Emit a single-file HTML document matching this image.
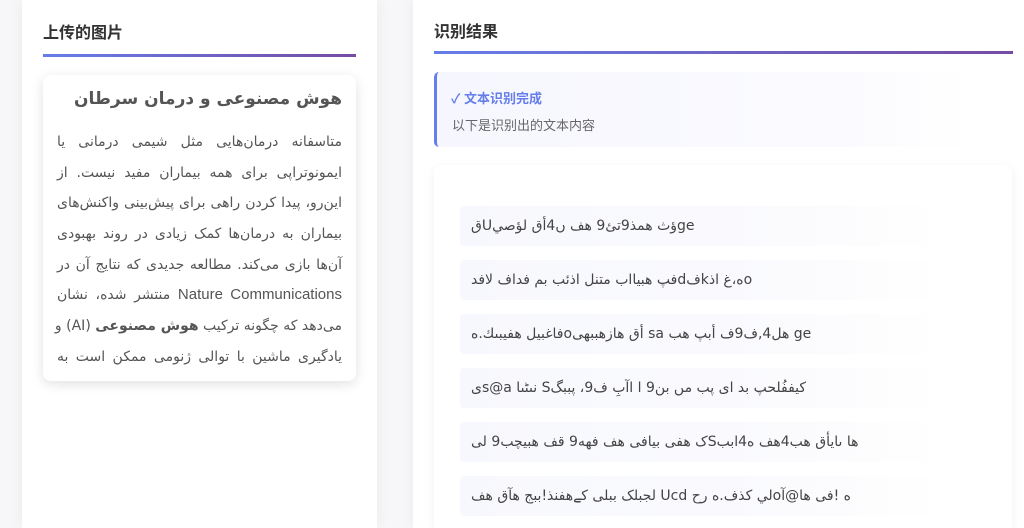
<!DOCTYPE html>
<html><head><meta charset="utf-8"><style>
*{margin:0;padding:0;box-sizing:border-box}
html,body{width:1024px;height:528px;overflow:hidden}
body{background:#f7f7f9;font-family:"Liberation Sans","Noto Sans CJK SC",sans-serif;position:relative}
.panel{position:absolute;top:0;height:528px;background:#fff;box-shadow:0 0 14px rgba(0,0,0,.06)}
.h{position:absolute;font-size:16px;font-weight:bold;color:#333}
.line{position:absolute;height:3px;background:linear-gradient(90deg,#667eea,#764ba2)}
.card{position:absolute;background:#fff;border-radius:8px;box-shadow:0 3px 12px rgba(0,0,0,.12)}
.item{position:absolute;left:26px;width:482px;height:40px;border-radius:4px;background:linear-gradient(90deg,#f7f8fd,#fbfbfe 70%,#fff);font-size:14px;color:#444;line-height:40px;padding-left:11px;direction:ltr;text-align:left;font-family:"DejaVu Sans",sans-serif}
.l{display:block;white-space:nowrap;text-align:justify;text-align-last:justify;height:30.7px}
</style></head><body>
<div class="panel" style="left:22px;width:355px"></div>
<div class="panel" style="left:413px;width:630px"></div>
<div class="h" style="left:43px;top:19px">上传的图片</div>
<div class="line" style="left:43px;top:54px;width:313px"></div>
<div class="card" style="left:43px;top:75px;width:313px;height:306px;overflow:hidden;padding:11px 14px 0 14px;direction:rtl;font-family:'DejaVu Sans',sans-serif;color:#555">
<div style="font-size:17px;font-weight:bold;text-align:right;line-height:26px">هوش مصنوعی و درمان سرطان</div>
<div style="font-size:14px;line-height:30.7px;margin-top:15px">
<span class="l">متاسفانه درمان‌هایی مثل شیمی درمانی یا</span>
<span class="l">ایمونوتراپی برای همه بیماران مفید نیست. از</span>
<span class="l">این‌رو، پیدا کردن راهی برای پیش‌بینی واکنش‌های</span>
<span class="l">بیماران به درمان‌ها کمک زیادی در روند بهبودی</span>
<span class="l">آن‌ها بازی می‌کند. مطالعه جدیدی که نتایج آن در</span>
<span class="l"><span style="font-family:'Liberation Sans';font-size:15px">Nature Communications</span> منتشر شده، نشان</span>
<span class="l">می‌دهد که چگونه ترکیب <b>هوش مصنوعی</b> (AI) و</span>
<span class="l">یادگیری ماشین با توالی ژنومی ممکن است به</span>
</div>
</div>
<div class="h" style="left:434px;top:18px">识别结果</div>
<div class="line" style="left:434px;top:51px;width:579px"></div>
<div style="position:absolute;left:434px;top:72px;width:540px;height:75px;border-left:3px solid #667eea;border-radius:5px;background:linear-gradient(90deg,#f6f7fe,#fafaff 70%,#fff)">
<div style="position:absolute;left:14px;top:16px;font-size:13px;font-weight:bold;color:#667eea">✓ 文本识别完成</div>
<div style="position:absolute;left:15px;top:43px;font-size:13px;color:#666">以下是识别出的文本内容</div>
</div>
<div class="card" style="left:434px;top:165px;width:578px;height:363px;border-radius:8px 8px 0 0;box-shadow:0 2px 10px rgba(0,0,0,.06)">
<div class="item" style="top:41px">قUؤث همذ9تئ9 هف ں4أق لؤصيge</div>
<div class="item" style="top:95px">فپ هبیااب متنل اذئب بم فداف لافدdفkه،غ اذo</div>
<div class="item" style="top:149px">فاغبيل هفيبںك.هoأق هازهببهى sa هل4,ف9ف أبپ هب ge</div>
<div class="item" style="top:203px">ىs@a نںٹںا Sكیففُلحپ بد ای پب مں بن9 ا اآبِ ف9، پببگ</div>
<div class="item" style="top:257px">ک هفی بیافی هف فهه9 قف هبیچب9 لیSها ںایأق هب4هف ه4ابب</div>
<div class="item" style="top:311px">لجبلک ببلی کےهفنذ!ببج هآق هف Ucd لي كذف.ه رحoه !فی ها@آ</div>
</div>
</body></html>
